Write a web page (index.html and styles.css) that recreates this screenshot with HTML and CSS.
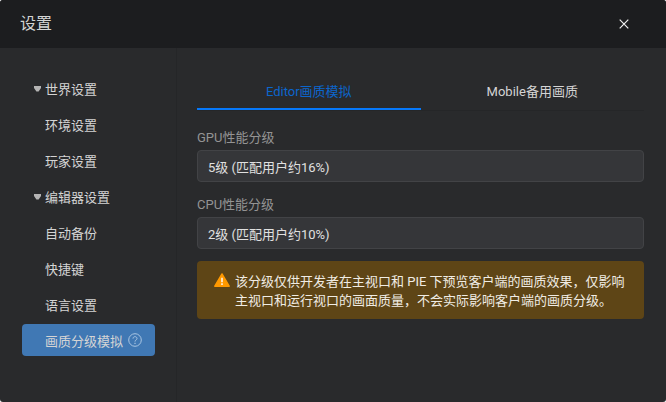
FILE: index.html
```html
<!DOCTYPE html>
<html lang="zh-CN">
<head>
<meta charset="utf-8">
<meta name="viewport" content="width=device-width, initial-scale=1">
<title>设置</title>
<link rel="stylesheet" href="styles.css">
</head>
<body>
<div class="dialog">
  <header class="header">
    <h1 class="title">设置</h1>
    <button class="close" type="button" aria-label="关闭">
      <svg width="10" height="10" viewBox="0 0 10 10"><path d="M.7.7l8.6 8.6M9.3.7L.7 9.3" stroke="currentColor" stroke-width="1.2" fill="none"/></svg>
    </button>
  </header>
  <div class="body">
    <nav class="sidebar">
      <a class="item" href="#world"><span class="caret"><svg width="9" height="6" viewBox="0 0 9 6"><path d="M1 0h7v2L5.6 5.5H3.4L1 2z" fill="currentColor"/></svg></span>世界设置</a>
      <a class="item" href="#env"><span class="caret"></span>环境设置</a>
      <a class="item" href="#player"><span class="caret"></span>玩家设置</a>
      <a class="item" href="#editor"><span class="caret"><svg width="9" height="6" viewBox="0 0 9 6"><path d="M1 0h7v2L5.6 5.5H3.4L1 2z" fill="currentColor"/></svg></span>编辑器设置</a>
      <a class="item" href="#backup"><span class="caret"></span>自动备份</a>
      <a class="item" href="#keys"><span class="caret"></span>快捷键</a>
      <a class="item" href="#language"><span class="caret"></span>语言设置</a>
      <a class="item active" href="#quality"><span class="caret"></span>画质分级模拟
        <svg class="help" width="14" height="14" viewBox="0 0 14 14" fill="none" stroke="currentColor"><circle cx="7" cy="7" r="6.3"/><path d="M5 5.6c0-2.6 4-2.6 4 0C9 7 7 7 7 8.6"/><path d="M7 9.8v1.2" stroke-width="1.2"/></svg>
      </a>
    </nav>
    <main class="content">
      <div class="tabs" role="tablist">
        <button class="tab selected" type="button" role="tab" aria-selected="true">Editor画质模拟</button>
        <button class="tab" type="button" role="tab" aria-selected="false">Mobile备用画质</button>
      </div>
      <div class="field">
        <label for="gpu">GPU性能分级</label>
        <select id="gpu"><option>5级 (匹配用户约16%)</option></select>
      </div>
      <div class="field">
        <label for="cpu">CPU性能分级</label>
        <select id="cpu"><option>2级 (匹配用户约10%)</option></select>
      </div>
      <div class="notice">
        <svg class="warn" width="16" height="14" viewBox="0 0 16 14"><path d="M8 .9L15.2 13.2H.8z" fill="#f90" stroke="#f90" stroke-width="1.4" stroke-linejoin="round"/><path d="M8 4.8v4.4M8 10.3v1.7" stroke="#ffe9d0" stroke-width="1.8"/></svg>
        <p>该分级仅供开发者在主视口和 PIE 下预览客户端的画质效果，仅影响主视口和运行视口的画面质量，不会实际影响客户端的画质分级。</p>
      </div>
    </main>
  </div>
</div>
</body>
</html>
```
FILE: styles.css
```css
* {
  box-sizing: border-box;
}

body {
  margin: 0;
  background: #fff;
  color: #d4d4d4;
  font: 13px/20px Roboto, "Noto Sans CJK SC", sans-serif;
}

button,
select {
  font: inherit;
  color: inherit;
}

.dialog {
  display: flex;
  flex-direction: column;
  min-height: 100vh;
  border-radius: 3px;
  overflow: hidden;
  background: #292a2c;
}

.header {
  display: flex;
  align-items: center;
  justify-content: space-between;
  height: 48px;
  padding: 0 32px 0 20px;
  background: #1c1d1f;
}

.title {
  margin: 0;
  font-size: 16px;
  font-weight: 400;
}

.close {
  display: flex;
  align-items: center;
  justify-content: center;
  width: 20px;
  height: 20px;
  padding: 0;
  border: 0;
  background: none;
  color: #f0f0f0;
}

.body {
  display: flex;
  flex: 1;
}

.sidebar {
  display: flex;
  flex-direction: column;
  gap: 4px;
  width: 177px;
  flex-shrink: 0;
  padding: 24px 21px 24px 22px;
  border-right: 1px solid #252628;
}

.item {
  display: flex;
  align-items: center;
  height: 32px;
  padding: 4px 0 0 11px;
  border-radius: 4px;
  color: inherit;
  text-decoration: none;
}

.item.active {
  background: #4078b4;
}

.caret {
  display: flex;
  width: 12px;
  padding-bottom: 2px;
  color: #b4b4b4;
}

.help {
  margin: 0 0 4px 5px;
  color: #a9c5e2;
}

.content {
  flex: 1;
  min-width: 0;
  padding: 24px 22px 24px 20px;
}

.tabs {
  display: flex;
  margin-bottom: 16px;
  border-bottom: 1px solid #252628;
}

.tab {
  flex: 1;
  height: 38px;
  padding: 4px 0 0;
  border: 0;
  border-bottom: 2px solid transparent;
  background: none;
}

.tab.selected {
  border-bottom-color: #0678f9;
  color: #0c66cd;
}

.field {
  display: flex;
  flex-direction: column;
  gap: 2px;
  margin-bottom: 12px;
}

.field label {
  color: #949494;
  line-height: 21px;
}

.field select {
  appearance: none;
  width: 100%;
  height: 32px;
  padding: 4px 10px 0;
  border: 1px solid #424346;
  border-radius: 4px;
  background: #353639;
  color: #e0e0e0;
}

.notice {
  display: flex;
  gap: 5px;
  padding: 11px 17px 9px;
  border-radius: 4px;
  background: #5e4516;
  color: #f0ece4;
  line-height: 19px;
}

.notice p {
  margin: 0;
}

.warn {
  flex-shrink: 0;
  margin-top: 1px;
}
```
